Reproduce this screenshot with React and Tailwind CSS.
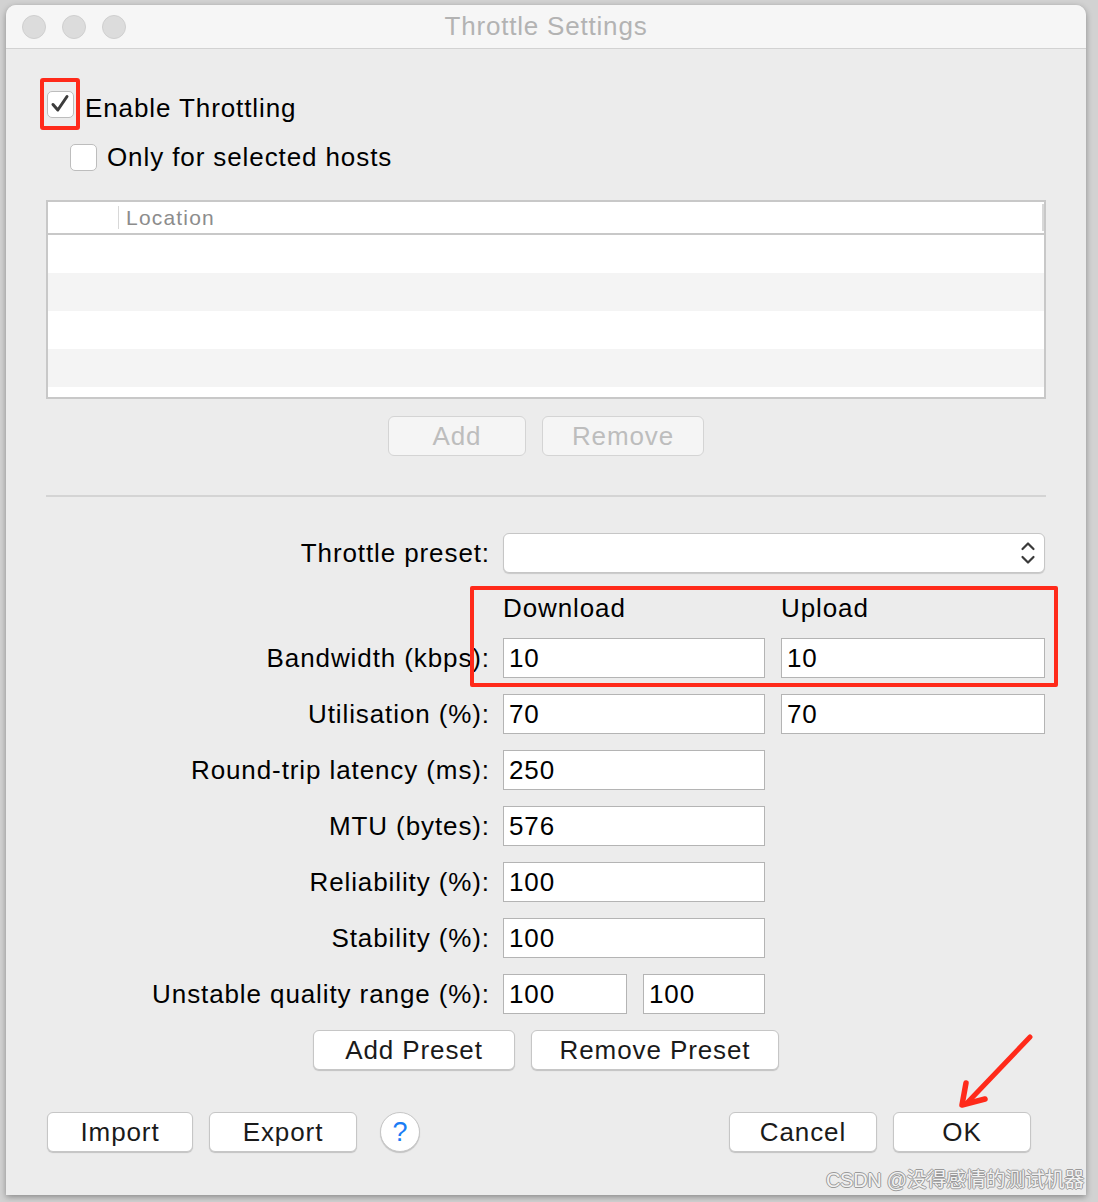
import React from "react";

const font = { fontFamily: '"Liberation Sans", Arial, sans-serif' };

function Field({ value, w = "w-[262px]" }) {
  return (
    <div className={`${w} h-[40px] bg-white border border-[#b4b4b4] flex items-center pl-[5px] text-[26px] text-black`}>
      {value}
    </div>
  );
}

function Btn({ children, w, disabled }) {
  return (
    <div
      className={`${w} h-[40px] rounded-[6px] border flex items-center justify-center text-[26px] ${
        disabled
          ? "bg-[#f5f5f5] border-[#d4d4d4] text-[#bdbdbd]"
          : "bg-white border-[#c6c6c6] text-[#1a1a1a] shadow-[0_1px_1px_rgba(0,0,0,0.18)]"
      }`}
    >
      {children}
    </div>
  );
}

function Row({ label, children }) {
  return (
    <div className="flex items-center mt-[16px] h-[40px]">
      <div className="w-[444px] text-right text-[26px] text-black -mr-[2px]">{label}</div>
      <div className="ml-[15px] flex gap-[16px]">{children}</div>
    </div>
  );
}

export default function App() {
  return (
    <div className="w-[1098px] h-[1202px] bg-[#d2d2d2] pt-[5px] pl-[6px] overflow-hidden relative tracking-[0.9px]" style={font}>
      <div className="w-[1080px] h-[1190px] bg-[#ececec] rounded-t-[10px] shadow-[0_2px_6px_rgba(0,0,0,0.35)] relative overflow-hidden">
        {/* title bar */}
        <div className="h-[44px] bg-[#f6f6f6] border-b border-[#d2d2d2] flex items-center relative">
          <div className="flex gap-[16px] ml-[16px]">
            <div className="w-[24px] h-[24px] rounded-full bg-[#dcdcdc] border border-[#cfcfcf]" />
            <div className="w-[24px] h-[24px] rounded-full bg-[#dcdcdc] border border-[#cfcfcf]" />
            <div className="w-[24px] h-[24px] rounded-full bg-[#dcdcdc] border border-[#cfcfcf]" />
          </div>
          <div className="absolute inset-0 flex items-center justify-center text-[26px] text-[#b3b3b3] tracking-[0.8px]">
            Throttle Settings
          </div>
        </div>

        <div className="px-[40px] relative">
          {/* enable throttling */}
          <div className="flex items-center mt-[29px] -ml-[6px] h-[52px]">
            <div className="w-[40px] h-[52px] border-[4px] border-[#ff2a1a] rounded-[3px] flex items-center justify-center">
              <div className="w-[27px] h-[27px] bg-white border border-[#bdbdbd] rounded-[5px] flex items-center justify-center">
                <svg width="22" height="22" viewBox="0 0 22 22">
                  <path d="M4 11.5 L8.8 17 L18 3.5" fill="none" stroke="#3c3c3c" strokeWidth="3" strokeLinecap="round" strokeLinejoin="round" />
                </svg>
              </div>
            </div>
            <span className="ml-[5px] mt-[8px] text-[26px] leading-[30px] text-black">Enable Throttling</span>
          </div>

          <div className="flex items-center mt-[13px] ml-[24px] h-[28px]">
            <div className="w-[27px] h-[27px] bg-white border border-[#bdbdbd] rounded-[5px]" />
            <span className="ml-[10px] text-[26px] leading-[30px] text-black">Only for selected hosts</span>
          </div>

          {/* table */}
          <div className="mt-[29px] h-[199px] border-2 border-[#c8c8c8] bg-white flex flex-col">
            <div className="h-[33px] border-b-2 border-[#c8c8c8] flex items-center relative">
              <div className="absolute left-[70px] top-[4px] bottom-[4px] w-px bg-[#d8d8d8]" />
              <div className="absolute right-[0px] top-[2px] bottom-[2px] w-[2px] bg-[#d8d8d8]" />
              <span className="ml-[78px] text-[21px] text-[#8c8c8c] tracking-[1.2px]">Location</span>
            </div>
            <div className="h-[38px] bg-white" />
            <div className="h-[38px] bg-[#f4f4f4]" />
            <div className="h-[38px] bg-white" />
            <div className="h-[38px] bg-[#f4f4f4]" />
            <div className="flex-1 bg-white" />
          </div>

          <div className="flex justify-center gap-[16px] mt-[17px]">
            <Btn w="w-[138px]" disabled>Add</Btn>
            <Btn w="w-[162px]" disabled>Remove</Btn>
          </div>

          <div className="mt-[39px] h-[2px] bg-[#d4d4d4]" />

          {/* form */}
          <div className="relative">
            <div className="flex items-center mt-[36px] h-[40px]">
              <div className="w-[444px] text-right text-[26px] text-black -mr-[2px]">Throttle preset:</div>
              <div className="ml-[15px] w-[542px] h-[40px] bg-white border border-[#c6c6c6] rounded-[6px] shadow-[0_1px_1px_rgba(0,0,0,0.15)] flex items-center justify-end pr-[8px]">
                <svg width="16" height="26" viewBox="0 0 16 26">
                  <path d="M2.5 9 L8 3.5 L13.5 9" fill="none" stroke="#3a3a3a" strokeWidth="2.2" strokeLinecap="round" strokeLinejoin="round" />
                  <path d="M2.5 17 L8 22.5 L13.5 17" fill="none" stroke="#3a3a3a" strokeWidth="2.2" strokeLinecap="round" strokeLinejoin="round" />
                </svg>
              </div>
            </div>

            <div className="flex items-center mt-[15px] h-[40px]">
              <div className="w-[442px]" />
              <div className="ml-[15px] w-[278px] text-[26px] text-black">Download</div>
              <div className="text-[26px] text-black">Upload</div>
            </div>

            <div className="flex items-center mt-[10px] h-[40px]">
              <div className="w-[444px] text-right text-[26px] text-black -mr-[2px]">Bandwidth (kbps):</div>
              <div className="ml-[15px] flex gap-[16px]">
                <Field value="10" />
                <Field value="10" w="w-[264px]" />
              </div>
            </div>
            <Row label="Utilisation (%):">
              <Field value="70" />
              <Field value="70" w="w-[264px]" />
            </Row>
            <Row label="Round-trip latency (ms):">
              <Field value="250" />
            </Row>
            <Row label="MTU (bytes):">
              <Field value="576" />
            </Row>
            <Row label="Reliability (%):">
              <Field value="100" />
            </Row>
            <Row label="Stability (%):">
              <Field value="100" />
            </Row>
            <Row label="Unstable quality range (%):">
              <Field value="100" w="w-[124px]" />
              <Field value="100" w="w-[122px]" />
            </Row>

            {/* annotation box */}
            <div className="absolute left-[424px] top-[53px] w-[588px] h-[101px] border-[4px] border-[#ff2a1a] rounded-[2px] pointer-events-none" />
          </div>

          <div className="flex justify-center gap-[16px] mt-[16px]">
            <Btn w="w-[202px]">Add Preset</Btn>
            <Btn w="w-[248px]">Remove Preset</Btn>
          </div>

          <div className="flex items-center mt-[42px]">
            <div className="ml-[1px] flex gap-[16px]">
              <Btn w="w-[146px]">Import</Btn>
              <Btn w="w-[148px]">Export</Btn>
            </div>
            <div className="ml-[23px] w-[40px] h-[40px] rounded-full bg-white border border-[#c6c6c6] shadow-[0_1px_1px_rgba(0,0,0,0.18)] flex items-center justify-center text-[27px] text-[#1a7cf5] tracking-normal">
              ?
            </div>
            <div className="ml-auto mr-[15px] flex gap-[16px]">
              <Btn w="w-[148px]">Cancel</Btn>
              <Btn w="w-[138px]">OK</Btn>
            </div>
          </div>
        </div>

        {/* arrow annotation */}
        <svg className="absolute left-[944px] top-[1022px]" width="90" height="84" viewBox="0 0 90 84">
          <path d="M80 10 L17 76" fill="none" stroke="#ff2a1a" strokeWidth="5" strokeLinecap="round" />
          <path d="M16 56 L12 78 L35 72" fill="none" stroke="#ff2a1a" strokeWidth="5.5" strokeLinecap="round" strokeLinejoin="round" />
        </svg>
      </div>

      <div
        className="absolute right-[14px] bottom-[7px] text-[20px] text-[#f2f2f2] tracking-[-0.3px]"
        style={{
          fontFamily: '"Liberation Sans", "Noto Sans CJK SC", sans-serif',
          textShadow: "1px 0 #9a9a9a, -1px 0 #9a9a9a, 0 1px #9a9a9a, 0 -1px #9a9a9a",
        }}
      >
        CSDN @没得感情的测试机器
      </div>
    </div>
  );
}
